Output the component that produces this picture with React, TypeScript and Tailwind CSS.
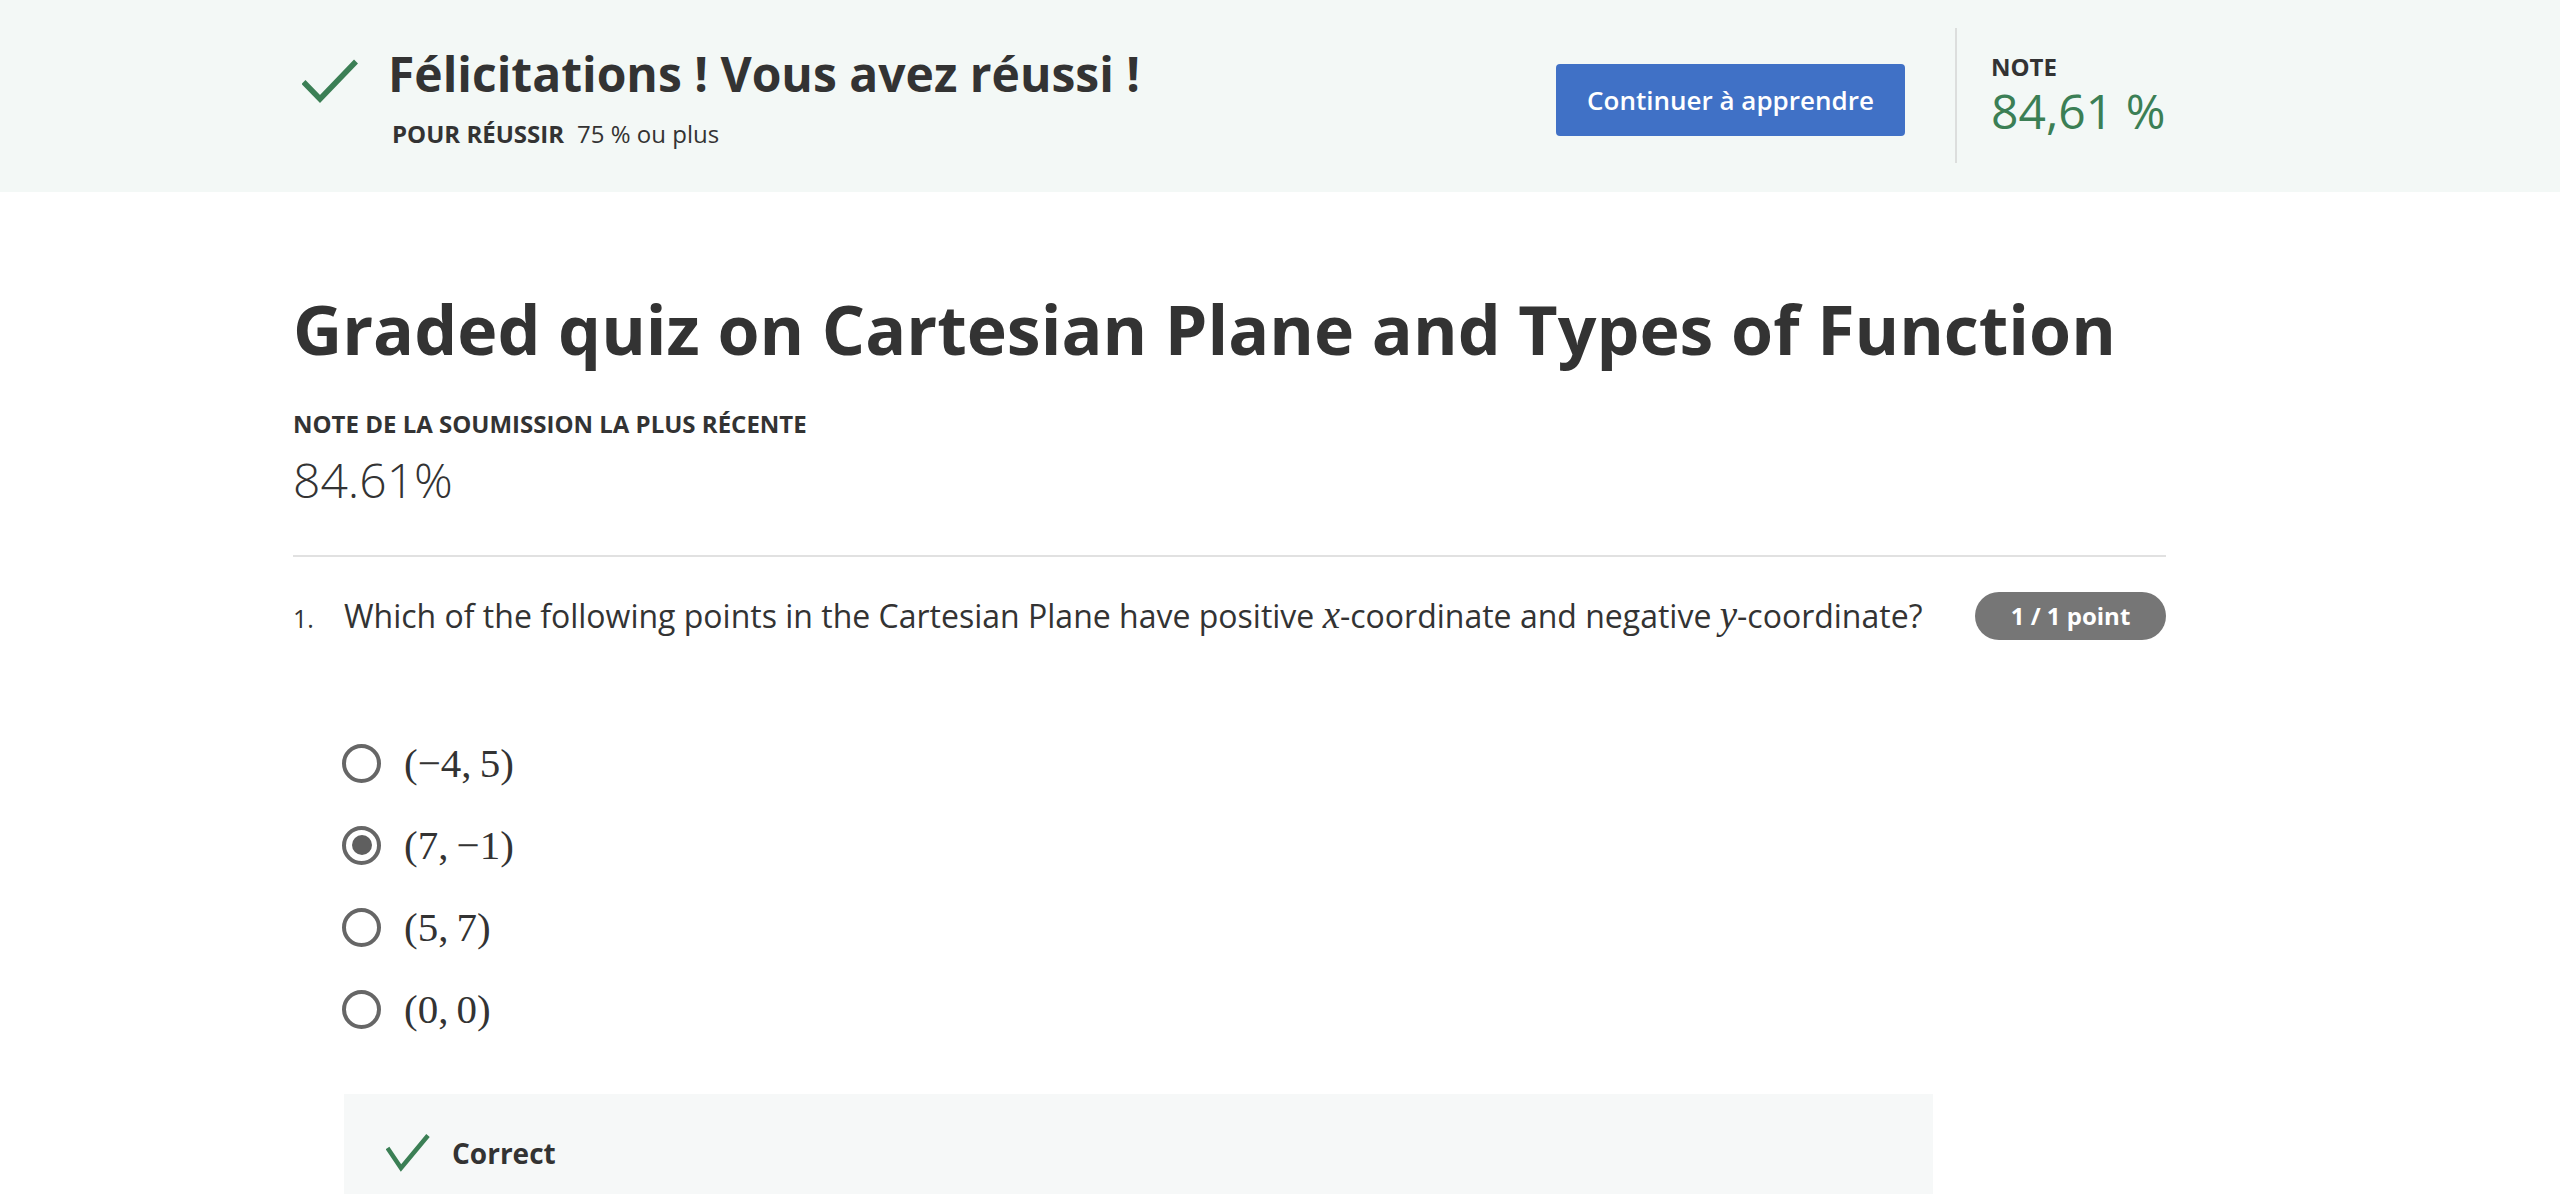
import React from "react";

function Check({ w, h, pts, sw }: { w: number; h: number; pts: string; sw: number }) {
  return (
    <svg width={w} height={h} viewBox={`0 0 ${w} ${h}`} className="shrink-0">
      <polyline points={pts} fill="none" stroke="#3b7f55" strokeWidth={sw} strokeLinecap="butt" strokeLinejoin="miter" />
    </svg>
  );
}

function Radio({ selected }: { selected?: boolean }) {
  return (
    <div className="w-[39px] h-[39px] rounded-full border-[4px] border-[#666666] flex items-center justify-center shrink-0">
      {selected && <div className="w-[20px] h-[20px] rounded-full bg-[#5f5f5f]" />}
    </div>
  );
}

function Option({ label, selected }: { label: string; selected?: boolean }) {
  return (
    <div className="h-[82px] flex items-center pl-[49px]">
      <Radio selected={selected} />
      <span className="ml-[23px] font-['Liberation_Serif',serif] text-[41px] leading-[48px] text-[#333333]">{label}</span>
    </div>
  );
}

export default function App() {
  return (
    <div className="min-h-[1194px] bg-white font-['Open_Sans',sans-serif] text-[#333333]">
      {/* Banner */}
      <div className="h-[192px] bg-[#f3f8f6]">
        <div className="ml-[293px] w-[1873px] h-full flex">
          <div className="flex-1 flex">
            <div className="ml-[9px] mt-[57px]">
              <Check w={56} h={46} pts="1.5,25 18,42 54,4.5" sw={5.5} />
            </div>
            <div className="ml-[30px] pt-[46px]">
              <div className="text-[48px] leading-[56px] font-bold text-[#333333]">Félicitations ! Vous avez réussi !</div>
              <div className="mt-[17px] text-[24px] leading-[30px] pl-[4px]">
                <span className="font-bold">POUR RÉUSSIR</span>
                <span className="ml-[13px]">75 % ou plus</span>
              </div>
            </div>
          </div>
          <div className="flex">
            <div className="mt-[64px] w-[349px] h-[72px] rounded-[4px] bg-[#4071c6] text-white text-[26px] font-semibold flex items-center justify-center">
              Continuer à apprendre
            </div>
            <div className="ml-[50px] mt-[28px] w-[2px] h-[135px] bg-[#dcdedd]" />
            <div className="ml-[34px] pt-[52px] w-[175px]">
              <div className="text-[24px] leading-[30px] font-bold">NOTE</div>
              <div className="mt-[1px] text-[48px] leading-[56px] text-[#3b7f55] whitespace-nowrap">84,61 %</div>
            </div>
          </div>
        </div>
      </div>

      {/* Main */}
      <div className="ml-[293px] w-[1873px]">
        <h1 className="mt-[92px] text-[68px] leading-[90px] font-bold text-[#333333] whitespace-nowrap">
          Graded quiz on Cartesian Plane and Types of Function
        </h1>
        <div className="mt-[35px] text-[24px] leading-[30px] font-bold">NOTE DE LA SOUMISSION LA PLUS RÉCENTE</div>
        <div className="mt-[11px] text-[48px] leading-[60px] font-light">84.61%</div>
        <div className="mt-[45px] h-[2px] bg-[#e1e1e1]" />

        <div className="mt-[35px] flex items-start justify-between">
          <div className="flex items-baseline">
            <span className="w-[51px] text-[25px]">1.</span>
            <span className="text-[32px] leading-[48px] whitespace-nowrap">
              Which of the following points in the Cartesian Plane have positive{" "}
              <span className="font-['Liberation_Serif',serif] italic text-[39px] leading-[0]">x</span>-coordinate and negative{" "}
              <span className="font-['Liberation_Serif',serif] italic text-[39px] leading-[0]">y</span>-coordinate?
            </span>
          </div>
          <div className="h-[48px] w-[191px] rounded-full bg-[#767676] text-white text-[24px] font-bold flex items-center justify-center">
            1 / 1 point
          </div>
        </div>

        <div className="mt-[82px]">
          <Option label={"(\u22124,\u20095)"} />
          <Option label={"(7,\u2009\u22121)"} selected />
          <Option label={"(5,\u20097)"} />
          <Option label={"(0,\u20090)"} />
        </div>

        <div className="mt-[44px] ml-[51px] w-[1589px] h-[120px] bg-[#f6f8f8] pt-[40px] pl-[42px] flex items-start">
          <Check w={44} h={38} pts="1.5,14 15,34 42,1.5" sw={4.5} />
          <span className="ml-[22px] text-[28px] leading-[38px] font-bold">Correct</span>
        </div>
      </div>
    </div>
  );
}
